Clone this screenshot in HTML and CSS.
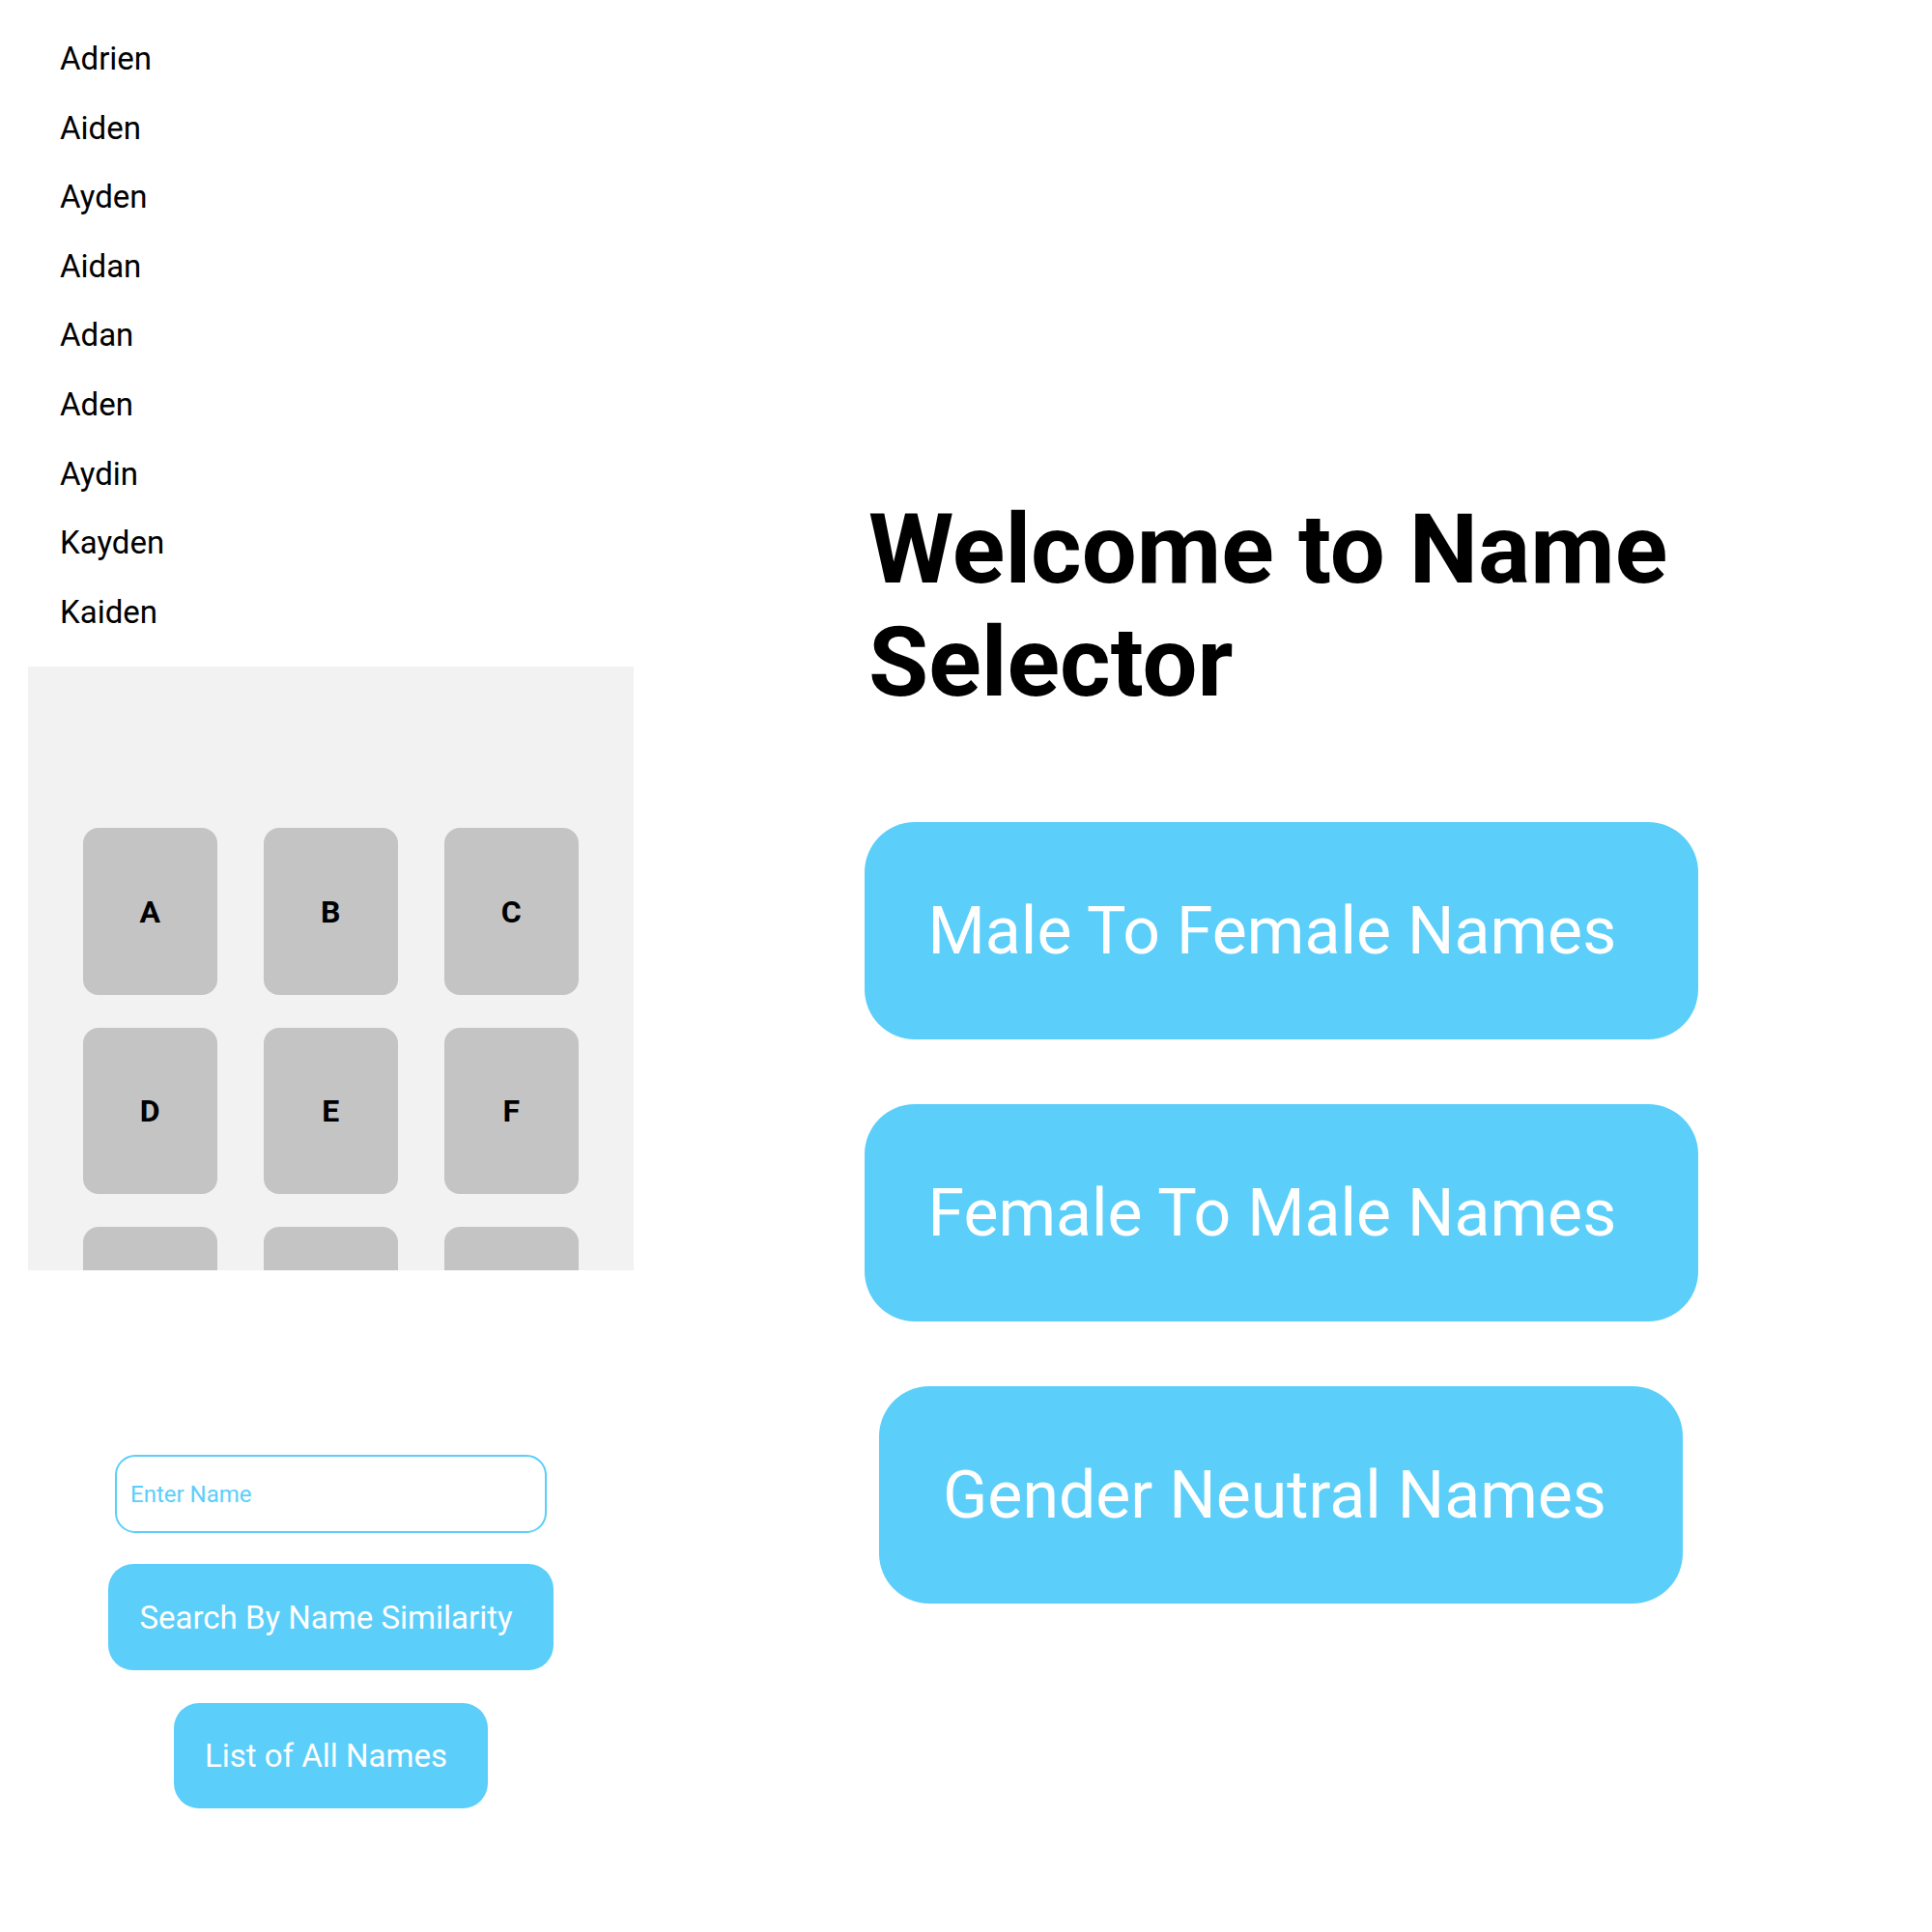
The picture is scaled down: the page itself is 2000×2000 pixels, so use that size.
FILE: index.html
```html
<!DOCTYPE html>
<html lang="en">
<head>
<meta charset="utf-8">
<title>Name Selector</title>
<link rel="stylesheet" href="styles.css">
</head>
<body>
<div class="page">
  <div class="left">
    <ul class="names">
      <li class="name">Adrien</li>
      <li class="name">Aiden</li>
      <li class="name">Ayden</li>
      <li class="name">Aidan</li>
      <li class="name">Adan</li>
      <li class="name">Aden</li>
      <li class="name">Aydin</li>
      <li class="name">Kayden</li>
      <li class="name">Kaiden</li>
    </ul>
    <div class="panel">
      <div class="grid">
        <div class="tile">A</div>
        <div class="tile">B</div>
        <div class="tile">C</div>
        <div class="tile">D</div>
        <div class="tile">E</div>
        <div class="tile">F</div>
        <div class="tile tile-cut"></div>
        <div class="tile tile-cut"></div>
        <div class="tile tile-cut"></div>
      </div>
    </div>
    <div class="form">
      <input class="name-input" type="text" placeholder="Enter Name">
      <button class="small-btn search-btn">Search By Name Similarity</button>
      <button class="small-btn list-btn">List of All Names</button>
    </div>
  </div>
  <div class="right">
    <h1 class="title">Welcome to Name Selector</h1>
    <button class="big-btn btn-wide first">Male To Female Names</button>
    <button class="big-btn btn-wide">Female To Male Names</button>
    <button class="big-btn btn-narrow">Gender Neutral Names</button>
  </div>
</div>
</body>
</html>
```

FILE: styles.css
```css
* {
  box-sizing: border-box;
}

html, body {
  margin: 0;
  padding: 0;
  background: #ffffff;
}

body {
  font-family: Roboto, "Noto Sans", "Liberation Sans", sans-serif;
  color: #000000;
  width: 2000px;
  height: 2000px;
}

.page {
  display: flex;
  align-items: flex-start;
}

.left {
  width: 627px;
  margin-left: 29px;
  display: flex;
  flex-direction: column;
}

.names {
  list-style: none;
  margin: 0;
  padding: 25px 0 0 33px;
}

.name {
  font-size: 33px;
  line-height: 71.6px;
  height: 71.6px;
}

.panel {
  margin-top: 21px;
  height: 625px;
  background: #f2f2f2;
  overflow: hidden;
  padding: 167px 0 0 56.5px;
}

.grid {
  display: grid;
  grid-template-columns: repeat(3, 139.5px);
  grid-auto-rows: 172.5px;
  column-gap: 47.5px;
  row-gap: 34px;
}

.tile {
  background: #c4c4c4;
  border-radius: 16px;
  display: flex;
  align-items: center;
  justify-content: center;
  font-size: 32px;
  font-weight: 700;
  color: #000000;
}

.form {
  margin-top: 191px;
  display: flex;
  flex-direction: column;
  align-items: center;
}

.name-input {
  width: 447px;
  height: 81px;
  border: 2px solid #5bcefa;
  border-radius: 21px;
  padding: 0 0 0 14px;
  font-family: Roboto, "Noto Sans", sans-serif;
  font-size: 24px;
  color: #5bcefa;
  background: #ffffff;
  outline: none;
}

.name-input::placeholder {
  color: #5bcefa;
  opacity: 1;
}

.small-btn {
  border: none;
  background: #5bcefa;
  color: #ffffff;
  font-family: Roboto, "Noto Sans", sans-serif;
  font-size: 33px;
  height: 110px;
  border-radius: 26px;
  padding: 0 42px 0 32px;
  display: flex;
  align-items: center;
  justify-content: center;
}

.search-btn {
  margin-top: 32px;
}

.list-btn {
  margin-top: 34px;
  height: 109px;
}

.right {
  margin-left: 238px;
  width: 864px;
  padding-top: 510px;
  display: flex;
  flex-direction: column;
  align-items: center;
}

.title {
  align-self: stretch;
  margin: 0;
  padding-left: 5px;
  font-size: 101px;
  font-weight: 700;
  line-height: 117px;
}

.big-btn {
  border: none;
  background: #5bcefa;
  color: #ffffff;
  font-family: Roboto, "Noto Sans", sans-serif;
  font-size: 68px;
  height: 225px;
  border-radius: 52px;
  margin-top: 67px;
  display: flex;
  align-items: center;
  justify-content: flex-start;
  padding: 0 0 0 66px;
}

.big-btn.first {
  margin-top: 107px;
}

.btn-wide {
  width: 863px;
}

.btn-narrow {
  width: 832px;
}
```
